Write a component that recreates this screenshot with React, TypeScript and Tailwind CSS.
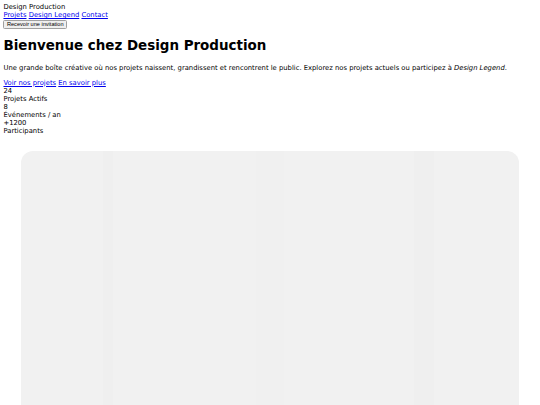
export default function App() {
  return (
    <div className="bg-white text-black font-['DejaVu_Sans',sans-serif] text-[6.8px] leading-[8.05px] p-[3.45px] min-h-[405px] overflow-hidden">
      <header>
        <div>Design Production</div>
        <nav>
          <a href="#" className="text-[#0000ee] underline">Projets</a>{" "}
          <a href="#" className="text-[#0000ee] underline">Design Legend</a>{" "}
          <a href="#" className="text-[#0000ee] underline">Contact</a>
        </nav>
        <button className="block bg-[#efefef] border border-[#a0a0a0] rounded-[1.5px] px-[2.5px] py-[0.4px] font-['Liberation_Sans',sans-serif] text-[5.6px] leading-[6.7px] text-black">
          Recevoir une invitation
        </button>
      </header>

      <section>
        <h1 className="font-bold text-[13.45px] leading-[16.1px] mt-[9.35px] mb-[9.25px]">
          Bienvenue chez Design Production
        </h1>
        <p className="mb-[6.9px]">
          Une grande boîte créative où nos projets naissent, grandissent et rencontrent le public. Explorez nos projets actuels ou participez à <em>Design Legend</em>.
        </p>
        <div>
          <a href="#" className="text-[#0000ee] underline">Voir nos projets</a>{" "}
          <a href="#" className="text-[#0000ee] underline">En savoir plus</a>
        </div>
        <div>
          <div>24</div>
          <div>Projets Actifs</div>
        </div>
        <div>
          <div>8</div>
          <div>Événements / an</div>
        </div>
        <div>
          <div>+1200</div>
          <div>Participants</div>
        </div>
      </section>

      <div className="mt-[16px] mx-[17.5px] h-[300px] rounded-[12px] bg-[#f1f1f1] flex">
        <div className="w-[82px]" />
        <div className="w-[10px] bg-[#efefef]" />
        <div className="w-[143px]" />
        <div className="w-[28px] bg-[#f0f0f0]" />
        <div className="w-[130px]" />
        <div className="w-[20px] bg-[#efefef]" />
      </div>
    </div>
  );
}
